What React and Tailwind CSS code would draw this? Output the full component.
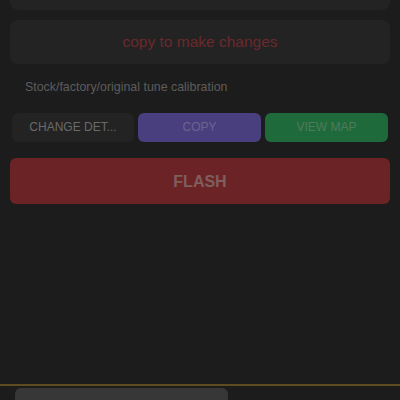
export default function App() {
  return (
    <div
      className="w-[400px] h-[400px] bg-[#1c1c1d] flex flex-col overflow-hidden"
      style={{ fontFamily: '"Liberation Sans", Arial, sans-serif' }}
    >
      <div className="flex-1 flex flex-col px-[10px]">
        {/* previous card, cut off */}
        <div className="h-[10px] bg-[#232323] rounded-b-lg" />

        {/* notice */}
        <div className="mt-[10px] h-[44px] bg-[#232323] rounded-lg flex items-center justify-center">
          <span className="text-[15.5px] text-[#6b292d]">copy to make changes</span>
        </div>

        <p className="mt-[14px] ml-[15px] text-[12.4px] text-[#5c5c5c]">
          Stock/factory/original tune calibration
        </p>

        {/* actions */}
        <div className="mt-[16px] flex gap-[4px] pl-[2px]">
          <button className="w-[122px] h-[29px] rounded-md bg-[#232323] text-[12px] text-[#6a6a6a]">
            CHANGE DET...
          </button>
          <button className="w-[123px] h-[29px] rounded-md bg-[#4a3f7e] text-[12px] text-[#6c6490]">
            COPY
          </button>
          <button className="w-[123px] h-[29px] rounded-md bg-[#1f6a3a] text-[12px] text-[#4f7a5d]">
            VIEW MAP
          </button>
        </div>

        <button className="mt-[16px] h-[46px] rounded-md bg-[#6b2326] text-[16px] font-bold text-[#7e5e5e] pt-[2px]">
          FLASH
        </button>
      </div>

      {/* bottom bar */}
      <div className="h-[2px] bg-[#5e4b22]" />
      <div className="h-[14px] flex px-[15px] pt-[2px]">
        <div className="w-[213px] h-full bg-[#373737] rounded-t-md" />
      </div>
    </div>
  );
}
